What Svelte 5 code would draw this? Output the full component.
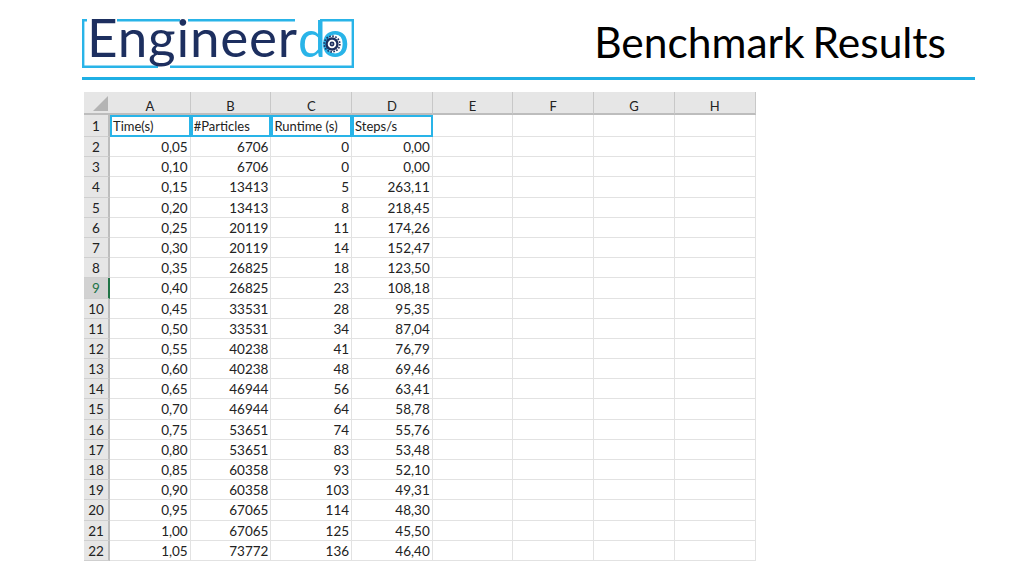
<script>
  const columns = ["A", "B", "C", "D", "E", "F", "G", "H"];
  const headings = ["Time(s)", "#Particles", "Runtime (s)", "Steps/s"];
  const rows = [
    ["0,05", "6706", "0", "0,00"],
    ["0,10", "6706", "0", "0,00"],
    ["0,15", "13413", "5", "263,11"],
    ["0,20", "13413", "8", "218,45"],
    ["0,25", "20119", "11", "174,26"],
    ["0,30", "20119", "14", "152,47"],
    ["0,35", "26825", "18", "123,50"],
    ["0,40", "26825", "23", "108,18"],
    ["0,45", "33531", "28", "95,35"],
    ["0,50", "33531", "34", "87,04"],
    ["0,55", "40238", "41", "76,79"],
    ["0,60", "40238", "48", "69,46"],
    ["0,65", "46944", "56", "63,41"],
    ["0,70", "46944", "64", "58,78"],
    ["0,75", "53651", "74", "55,76"],
    ["0,80", "53651", "83", "53,48"],
    ["0,85", "60358", "93", "52,10"],
    ["0,90", "60358", "103", "49,31"],
    ["0,95", "67065", "114", "48,30"],
    ["1,00", "67065", "125", "45,50"],
    ["1,05", "73772", "136", "46,40"]
  ];
</script>

<div class="slide">
  <header class="topo">
    <div class="logo">
      <svg class="moldura" width="272" height="49" viewBox="0 0 272 49" fill="none" stroke="#29b4e8" stroke-width="2.4">
        <path d="M5 1.2H1.2V47.8H76M88 47.8H270.8V1.2H238M213 1.2H106M98 1.2H35" />
      </svg>
      <span class="nome">Engineer</span><span class="nome-azul">do</span>
      <svg class="engrenagem" width="18" height="18" viewBox="0 0 22 22">
        <circle cx="11" cy="11" r="8.2" fill="#1d2f5f" />
        <circle cx="11" cy="11" r="9.6" fill="none" stroke="#1d2f5f" stroke-width="2" stroke-dasharray="2 1.77" />
        <circle cx="11" cy="11" r="5.2" fill="#fff" />
        <circle cx="11" cy="11" r="3" fill="#1d2f5f" />
        <circle cx="11" cy="11" r="1.1" fill="#8d9ab8" />
      </svg>
    </div>
    <h1>Benchmark Results</h1>
  </header>

  <div class="planilha">
    <div class="canto"><span class="triangulo"></span></div>
    {#each columns as col}
      <div class="cab-col">{col}</div>
    {/each}

    <div class="cab-lin primeira">1</div>
    {#each headings as h}
      <div class="cel destaque">{h}</div>
    {/each}
    {#each Array(4) as _}
      <div class="cel"></div>
    {/each}

    {#each rows as row, i}
      <div class="cab-lin" class:ativa={i === 7}>{i + 2}</div>
      {#each row as valor}
        <div class="cel num">{valor}</div>
      {/each}
      {#each Array(4) as _}
        <div class="cel"></div>
      {/each}
    {/each}
  </div>
</div>

<style>
  :global(body) {
    background: #fff;
    overflow: hidden;
  }

  .slide {
    width: 1024px;
    height: 576px;
    padding: 0 49px 0 82px;
    box-sizing: border-box;
    font-family: Lato, "Open Sans", sans-serif;
    color: #000;
  }

  /* topo */
  .topo {
    height: 80px;
    display: flex;
    justify-content: space-between;
    align-items: flex-start;
    padding-right: 29px;
    border-bottom: 3px solid #1fafe4;
    box-sizing: border-box;
  }

  .logo {
    position: relative;
    width: 272px;
    height: 49px;
    margin-top: 19px;
    white-space: nowrap;
    line-height: 49px;
    font-size: 53px;
    padding-left: 5px;
    box-sizing: border-box;
  }
  .moldura {
    position: absolute;
    left: 0;
    top: 0;
  }
  .nome {
    position: relative;
    color: #1d2f5f;
    top: -7px;
    letter-spacing: 0.8px;
  }
  .nome-azul {
    position: relative;
    top: -7px;
    color: #29b4e8;
    font-size: 50px;
    letter-spacing: -5px;
  }
  .engrenagem {
    position: absolute;
    left: 241px;
    top: 16px;
  }

  h1 {
    margin: 19px 0 0;
    font-size: 42.5px;
    line-height: 46px;
    font-weight: 400;
    word-spacing: -3px;
  }

  /* planilha */
  .planilha {
    display: grid;
    grid-template-columns: 26px repeat(8, 80.7px);
    grid-template-rows: 23px 22px;
    grid-auto-rows: 20.2px;
    width: 671.6px;
    margin: 12px 0 0 2px;
    font-size: 13px;
    color: #222;
  }

  .canto,
  .cab-col {
    background: #e6e6e6;
    border-bottom: 2px solid #bdbdbd;
    box-sizing: border-box;
  }
  .canto {
    position: relative;
  }
  .triangulo {
    position: absolute;
    right: 2px;
    bottom: 2px;
    width: 0;
    height: 0;
    border-left: 15px solid transparent;
    border-bottom: 15px solid #b4b4b4;
  }
  .cab-col {
    text-align: center;
    line-height: 29px;
    border-right: 1px solid #c8c8c8;
  }

  .cab-lin {
    background: #e6e6e6;
    border-right: 2px solid #bdbdbd;
    border-bottom: 1px solid #cfcfcf;
    box-sizing: border-box;
    text-align: center;
    line-height: 20px;
    font-size: 13.5px;
  }
  .cab-lin.primeira {
    line-height: 22px;
  }
  .cab-lin.ativa {
    background: #d2d2d2;
    color: #217346;
    border-right-color: #217346;
  }

  .cel {
    border-right: 1px solid #e2e2e2;
    border-bottom: 1px solid #e2e2e2;
    box-sizing: border-box;
    line-height: 20px;
    padding: 0 2px;
    white-space: nowrap;
    overflow: hidden;
  }
  .num {
    text-align: right;
    font-size: 13.5px;
  }
  .destaque {
    border: 2px solid #29b4e8;
    line-height: 18px;
    padding: 0 1px;
  }
</style>
